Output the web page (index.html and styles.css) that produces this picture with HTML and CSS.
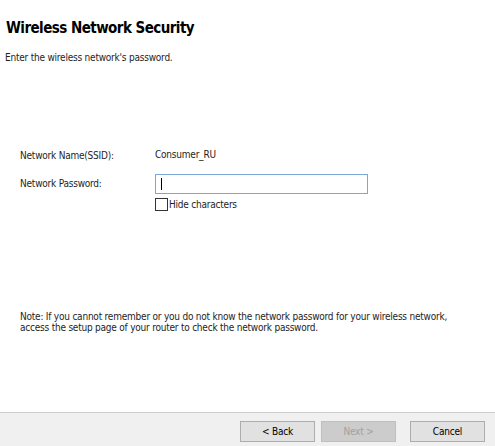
FILE: index.html
```html
<!DOCTYPE html>
<html>
<head>
<meta charset="utf-8">
<link rel="stylesheet" href="styles.css">
</head>
<body>
<div class="dialog">
  <div class="content">
    <h1 class="title">Wireless Network Security</h1>
    <p class="subtitle">Enter the wireless network's password.</p>
    <div class="form">
      <div class="row row-ssid">
        <span class="label">Network Name(SSID):</span>
        <span class="value">Consumer_RU</span>
      </div>
      <div class="row row-pass">
        <span class="label">Network Password:</span>
        <div class="field">
          <div class="input"><span class="caret"></span></div>
          <label class="check"><span class="box"></span><span>Hide characters</span></label>
        </div>
      </div>
    </div>
    <p class="note">Note: If you cannot remember or you do not know the network password for your wireless network,<br>access the setup page of your router to check the network password.</p>
  </div>
  <div class="footer">
    <button class="btn">&lt; Back</button>
    <button class="btn disabled">Next &gt;</button>
    <button class="btn cancel">Cancel</button>
  </div>
</div>
</body>
</html>
```
FILE: styles.css
```css
html, body {
  margin: 0;
  padding: 0;
  background: #ffffff;
}
body {
  width: 495px;
  height: 446px;
  overflow: hidden;
  font-family: "DejaVu Sans Condensed", "DejaVu Sans", sans-serif;
  font-size: 10px;
  letter-spacing: -0.22px;
  color: #1e1e1e;
}
.dialog {
  display: flex;
  flex-direction: column;
  height: 446px;
}
.content {
  flex: 1;
  display: flex;
  flex-direction: column;
}
.title {
  margin: 19px 0 0 6px;
  font-size: 15px;
  font-weight: bold;
  line-height: 18px;
  letter-spacing: -0.55px;
  color: #000;
}
.subtitle {
  margin: 14px 0 0 5px;
  line-height: 13px;
}
.form {
  margin: 85px 0 0 20px;
  display: flex;
  flex-direction: column;
}
.row {
  display: flex;
}
.label {
  width: 135px;
  line-height: 13px;
}
.row-pass {
  margin-top: 12px;
}
.row-pass .label {
  line-height: 20px;
}
.field {
  display: flex;
  flex-direction: column;
}
.input {
  box-sizing: border-box;
  width: 213px;
  height: 20px;
  border: 1px solid #7aa7d8;
  display: flex;
  align-items: center;
  padding-left: 5px;
}
.caret {
  width: 1px;
  height: 12px;
  background: #000;
}
.check {
  display: flex;
  align-items: center;
  margin-top: 4px;
  line-height: 13px;
}
.box {
  box-sizing: border-box;
  width: 13px;
  height: 13px;
  border: 1px solid #333;
  background: #fff;
  margin-right: 1px;
}
.note {
  margin: 100px 0 0 20px;
  line-height: 11px;
}
.footer {
  box-sizing: border-box;
  height: 34px;
  border-top: 1px solid #cccccc;
  background: #f0f0f0;
  display: flex;
  justify-content: flex-end;
  align-items: flex-start;
  padding: 8px 10px 0 0;
  gap: 6px;
}
.btn {
  width: 75px;
  height: 21px;
  border: 1px solid #adadad;
  background: #e1e1e1;
  font-family: "DejaVu Sans Condensed", "DejaVu Sans", sans-serif;
  font-size: 10px;
  letter-spacing: -0.2px;
  color: #000;
  padding: 0;
}
.btn.disabled {
  color: #a0a0a0;
  border-color: #bfbfbf;
  background: #cccccc;
}
.btn.cancel {
  margin-left: 8px;
}
```
